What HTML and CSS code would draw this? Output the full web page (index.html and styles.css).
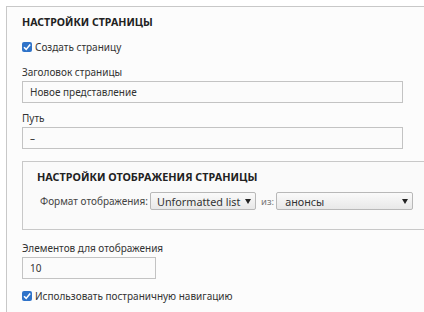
FILE: index.html
```html
<!DOCTYPE html>
<html lang="ru">
<head>
<meta charset="utf-8">
<link rel="stylesheet" href="styles.css">
</head>
<body>
<div class="page">
  <fieldset class="panel">
    <h2 class="panel-title">НАСТРОЙКИ СТРАНИЦЫ</h2>
    <div class="check-row">
      <span class="checkbox"><svg viewBox="0 0 10 10" width="10" height="10"><path d="M2 5.2 L4.2 7.4 L8.2 2.6" fill="none" stroke="#fff" stroke-width="1.6"/></svg></span>
      <span>Создать страницу</span>
    </div>
    <div class="field first">
      <label class="label">Заголовок страницы</label>
      <div class="input wide">Новое представление</div>
    </div>
    <div class="field">
      <label class="label">Путь</label>
      <div class="input wide">–</div>
    </div>
    <fieldset class="subpanel">
      <h3 class="sub-title">НАСТРОЙКИ ОТОБРАЖЕНИЯ СТРАНИЦЫ</h3>
      <div class="format-row">
        <span class="format-label">Формат отображения:</span>
        <div class="select sel-format"><span>Unformatted list</span><span class="arrow"></span></div>
        <span class="of">из:</span>
        <div class="select sel-of"><span>анонсы</span><span class="arrow"></span></div>
      </div>
    </fieldset>
    <div class="field after-sub">
      <label class="label">Элементов для отображения</label>
      <div class="input short">10</div>
    </div>
    <div class="check-row last">
      <span class="checkbox"><svg viewBox="0 0 10 10" width="10" height="10"><path d="M2 5.2 L4.2 7.4 L8.2 2.6" fill="none" stroke="#fff" stroke-width="1.6"/></svg></span>
      <span>Использовать постраничную навигацию</span>
    </div>
  </fieldset>
</div>
</body>
</html>
```
FILE: styles.css
```css
html, body {
  margin: 0;
  padding: 0;
  background: #fff;
  overflow: hidden;
}
body {
  font-family: "Noto Sans", "Open Sans", sans-serif;
  font-size: 10px;
  color: #333;
}
.page {
  padding: 6px 0 0 6px;
}
.panel {
  margin: 0;
  border: 1px solid #c8c8c8;
  border-right: none;
  border-bottom: none;
  background: #fcfcfc;
  padding: 8px 0 20px 15px;
  min-width: 0;
}
.panel-title {
  margin: 0;
  font-size: 10.6px;
  font-weight: bold;
  color: #222;
  line-height: 14px;
}
.check-row {
  display: flex;
  align-items: center;
  gap: 3px;
  margin-top: 11px;
  line-height: 14px;
  white-space: nowrap;
}
.check-row.last {
  margin-top: 10px;
}
.checkbox {
  width: 10px;
  height: 10px;
  background: #2f73c9;
  border-radius: 2px;
  display: inline-flex;
  flex-shrink: 0;
}
.field {
  margin-top: 8px;
  display: flex;
  flex-direction: column;
  align-items: flex-start;
}
.field.first {
  margin-top: 11px;
}
.field.after-sub {
  margin-top: 11px;
}
.label {
  line-height: 14px;
  margin-bottom: 2px;
}
.input {
  box-sizing: border-box;
  height: 22px;
  border: 1px solid #c3c3c3;
  background: #fbfbfb;
  padding: 0 7px;
  line-height: 20px;
  color: #333;
}
.input.wide {
  width: 381px;
}
.input.short {
  width: 134px;
}
.subpanel {
  margin: 12px 0 0 0;
  border: 1px solid #c8c8c8;
  border-right: none;
  background: #fafafa;
  padding: 8px 0 19px 14px;
  min-width: 0;
}
.sub-title {
  margin: 0;
  font-size: 10.8px;
  font-weight: bold;
  color: #222;
  line-height: 14px;
}
.format-row {
  display: flex;
  align-items: center;
  margin-top: 8px;
  padding-left: 3px;
  white-space: nowrap;
}
.format-label {
  margin-right: 2px;
  flex-shrink: 0;
  color: #444;
}
.select {
  box-sizing: border-box;
  height: 18px;
  border: 1px solid #b8b8b8;
  border-radius: 2px;
  background: linear-gradient(#fafafa, #e8e8e8);
  display: flex;
  align-items: center;
  justify-content: space-between;
  padding: 0 4px 0 6px;
  font-size: 10.8px;
  color: #333;
  flex-shrink: 0;
}
.sel-format {
  width: 106px;
}
.sel-of {
  width: 137px;
  padding-left: 8px;
}
.arrow {
  width: 0;
  height: 0;
  border-left: 3.5px solid transparent;
  border-right: 3.5px solid transparent;
  border-top: 5px solid #222;
}
.of {
  font-size: 9.5px;
  color: #777;
  margin: 0 2px 0 5px;
  flex-shrink: 0;
}
```
